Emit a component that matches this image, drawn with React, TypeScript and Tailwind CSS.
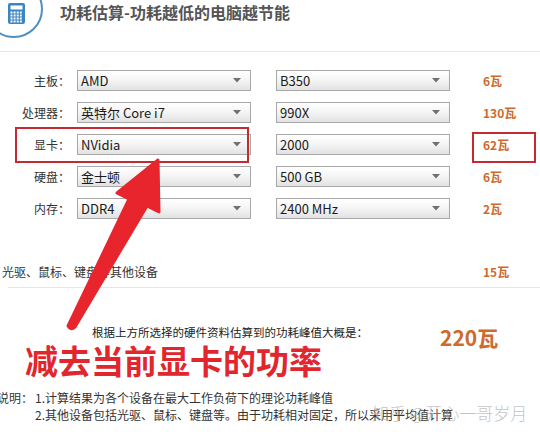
import React from "react";

const FONT = "font-['Microsoft_YaHei','Noto_Sans_CJK_SC','Liberation_Sans',sans-serif]";

function Select({ value }: { value: string }) {
  return (
    <div className="flex h-[21px] w-[174px] items-center justify-between border border-[#a8a8a8] bg-linear-to-b from-white via-[#f4f4f4] to-[#e2e2e2] pl-[3px] pr-[9px]">
      <span className="text-[13px] leading-[19px] text-[#1a1a1a] font-['Noto_Sans_CJK_SC','Liberation_Sans',sans-serif]">{value}</span>
      <svg width="8" height="5" viewBox="0 0 8 5">
        <path d="M0 0 H8 L4 4.5 Z" fill="#707070" />
      </svg>
    </div>
  );
}

const rows = [
  { label: "主板：", a: "AMD", b: "B350", w: "6瓦" },
  { label: "处理器：", a: "英特尔 Core i7", b: "990X", w: "130瓦" },
  { label: "显卡：", a: "NVidia", b: "2000", w: "62瓦" },
  { label: "硬盘：", a: "金士顿", b: "500 GB", w: "6瓦" },
  { label: "内存：", a: "DDR4", b: "2400 MHz", w: "2瓦" },
];

export default function App() {
  return (
    <div className={`relative h-[438px] w-[540px] overflow-hidden bg-white text-[#333] ${FONT}`}>
      {/* header */}
      <div className="flex h-[52px] items-start border-b border-[#e6e6e6]">
        <div className="-ml-[15px] -mt-[20px] flex h-[58px] w-[58px] shrink-0 items-center justify-center rounded-full border-2 border-[#4f90c2] pl-[5px] pt-[8px]">
          <svg width="17" height="21" viewBox="0 0 17 21">
            <rect x="0" y="0" width="17" height="21" rx="2" fill="#3a86c0" />
            <rect x="2.5" y="2.5" width="12" height="4" fill="#ffffff" />
            {[0, 1, 2, 3].map((r) =>
              [0, 1, 2, 3].map((c) => (
                <rect key={`${r}-${c}`} x={2.5 + c * 3.1} y={8.5 + r * 3} width="2" height="2" fill="#ffffff" />
              ))
            )}
          </svg>
        </div>
        <div className="ml-[17px] mt-[1px] text-[16px] font-bold leading-[22px] text-[#555]">功耗估算-功耗越低的电脑越节能</div>
      </div>

      {/* hardware rows */}
      <div className="mt-[18px] flex flex-col gap-[11px]">
        {rows.map((r) => (
          <div key={r.label} className="flex h-[21px] items-center">
            <div className="w-[70px] text-right text-[12px] text-[#333]">{r.label}</div>
            <div className="ml-[7px]">
              <Select value={r.a} />
            </div>
            <div className="ml-[25px]">
              <Select value={r.b} />
            </div>
            <div className="ml-[33px] text-[12px] font-bold text-[#cf6a2c]">{r.w}</div>
          </div>
        ))}
      </div>

      {/* other devices */}
      <div className="mt-[44px] flex h-[17px] items-center">
        <div className="w-[483px] pl-[2px] text-[12px] text-[#333]">光驱、鼠标、键盘等其他设备</div>
        <div className="text-[12px] font-bold text-[#cf6a2c]">15瓦</div>
      </div>
      <div className="ml-[8px] mt-[7px] h-px bg-[#e3e6ea]" />

      {/* summary */}
      <div className="mt-[36px] flex h-[16px] items-start">
        <div className="w-[440px] pl-[92px] text-[11.5px] leading-[16px] text-[#222]">根据上方所选择的硬件资料估算到的功耗峰值大概是：</div>
        <div className="mt-[1px] text-[21px] font-bold leading-[24px] text-[#cf6a2c]">220瓦</div>
      </div>

      <div className="ml-[25px] mt-[2px] text-[33px] font-bold leading-[36px] text-[#e1262d]">减去当前显卡的功率</div>

      {/* notes */}
      <div className="mt-[11px] flex text-[12px] leading-[17px] text-[#333]">
        <div className="-ml-[3px] w-[38px] shrink-0">说明：</div>
        <div className="flex flex-col">
          <div>1.计算结果为各个设备在最大工作负荷下的理论功耗峰值</div>
          <div>2.其他设备包括光驱、鼠标、键盘等。由于功耗相对固定，所以采用平均值计算</div>
        </div>
      </div>

      {/* watermark */}
      <div className="pointer-events-none absolute left-[372px] top-[403px] text-[17px] font-light leading-[20px] text-[#a8a8a8]/70">
        知乎 @开心一哥岁月
      </div>

      {/* annotations */}
      <div className="pointer-events-none absolute left-[15px] top-[127px] h-[36px] w-[234px] border-2 border-[#c32a31]" />
      <div className="pointer-events-none absolute left-[472px] top-[132px] h-[31px] w-[64px] border-2 border-[#c32a31]" />
      <svg className="pointer-events-none absolute left-0 top-0" width="540" height="438" viewBox="0 0 540 438">
        <path
          d="M158 160 L159 212 L147 206 L75 327 Q71 331 68 326 L129 199 L117 193 Z"
          fill="#e8242c"
          stroke="#e8242c"
          strokeWidth="3"
          strokeLinejoin="round"
        />
      </svg>
    </div>
  );
}
